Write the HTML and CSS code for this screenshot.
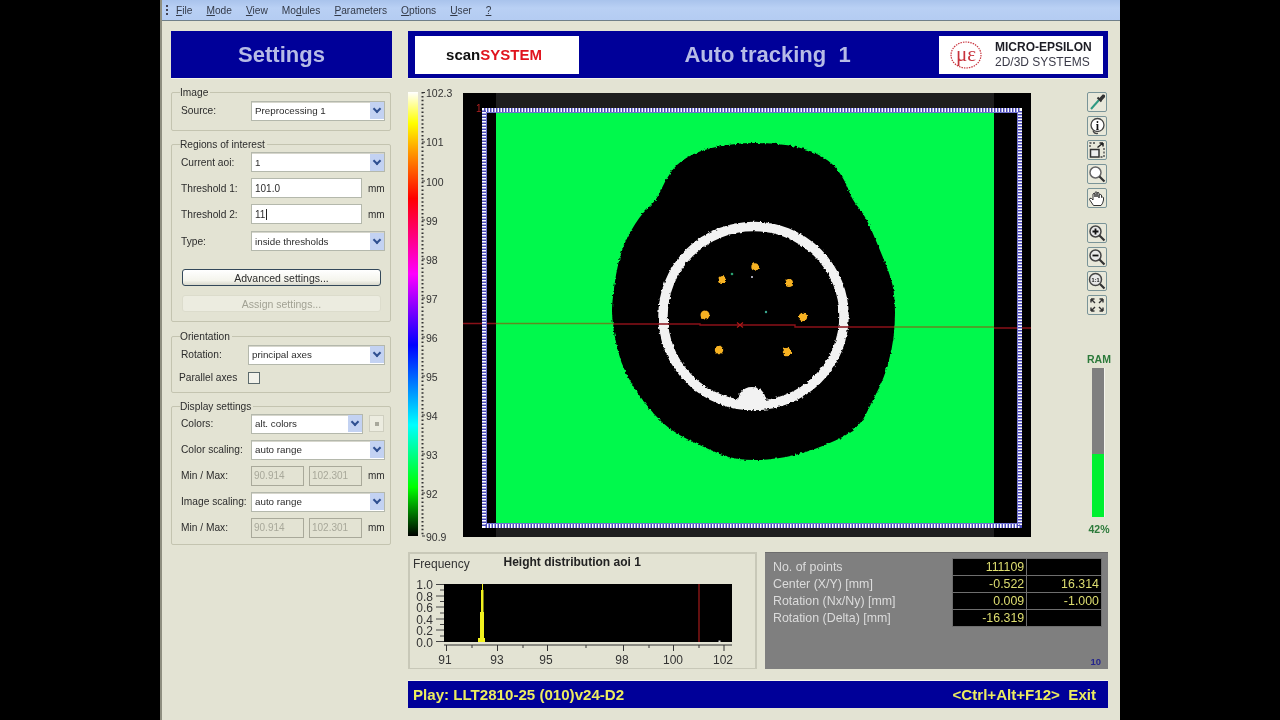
FILE: index.html
```html
<!DOCTYPE html>
<html lang="en">
<head>
  <meta charset="UTF-8" />
  <title>scanSYSTEM - Auto tracking 1</title>
  <link rel="stylesheet" href="styles.css">
</head>
<body>
<div class="app">

  <!-- menu bar -->
  <nav class="menu">
    <span class="grip"></span>
    <span><u>F</u>ile</span>
    <span><u>M</u>ode</span>
    <span><u>V</u>iew</span>
    <span>Mo<u>d</u>ules</span>
    <span><u>P</u>arameters</span>
    <span><u>O</u>ptions</span>
    <span><u>U</u>ser</span>
    <span><u>?</u></span>
  </nav>

  <div class="content">

    <!-- left settings column -->
    <aside class="sidebar">
      <h1 class="banner settings-title">Settings</h1>

      <fieldset class="group group-image">
        <legend>Image</legend>
        <div class="row">
          <label>Source:</label>
          <div class="combo"><span>Preprocessing 1</span><i class="arrow"></i></div>
        </div>
      </fieldset>

      <fieldset class="group group-roi">
        <legend>Regions of interest</legend>
        <div class="row">
          <label>Current aoi:</label>
          <div class="combo"><span>1</span><i class="arrow"></i></div>
        </div>
        <div class="row">
          <label>Threshold 1:</label>
          <div class="field"><span>101.0</span></div>
          <span class="unit">mm</span>
        </div>
        <div class="row">
          <label>Threshold 2:</label>
          <div class="field"><span class="caret">11</span></div>
          <span class="unit">mm</span>
        </div>
        <div class="row row-type">
          <label>Type:</label>
          <div class="combo"><span>inside thresholds</span><i class="arrow"></i></div>
        </div>
        <button class="btn btn-main">Advanced settings...</button>
        <button class="btn btn-off">Assign settings...</button>
      </fieldset>

      <fieldset class="group group-orient">
        <legend>Orientation</legend>
        <div class="row row-wide">
          <label>Rotation:</label>
          <div class="combo"><span>principal axes</span><i class="arrow"></i></div>
        </div>
        <div class="row row-wide row-check">
          <label>Parallel axes</label>
          <span class="check"></span>
        </div>
      </fieldset>

      <fieldset class="group group-display">
        <legend>Display settings</legend>
        <div class="row">
          <label>Colors:</label>
          <div class="combo combo-short"><span>alt. colors</span><i class="arrow"></i></div>
          <span class="mini"><b></b></span>
        </div>
        <div class="row">
          <label>Color scaling:</label>
          <div class="combo"><span>auto range</span><i class="arrow"></i></div>
        </div>
        <div class="row">
          <label>Min / Max:</label>
          <div class="field field-off"><span>90.914</span></div>
          <div class="field field-off"><span>102.301</span></div>
          <span class="unit">mm</span>
        </div>
        <div class="row">
          <label>Image scaling:</label>
          <div class="combo"><span>auto range</span><i class="arrow"></i></div>
        </div>
        <div class="row">
          <label>Min / Max:</label>
          <div class="field field-off"><span>90.914</span></div>
          <div class="field field-off"><span>102.301</span></div>
          <span class="unit">mm</span>
        </div>
      </fieldset>
    </aside>

    <main class="main">
      <header class="banner top-banner">
        <div class="logo-scan">scan<em>SYSTEM</em></div>
        <h2 class="page-title">Auto tracking&nbsp; 1</h2>
        <div class="logo-me">
          <svg class="me-mark" width="34" height="30" viewBox="0 0 34 30">
            <ellipse cx="17" cy="15" rx="15" ry="13" fill="none" stroke="#c8323c" stroke-width="1.2" stroke-dasharray="1.5 1"/>
            <text x="17" y="21" text-anchor="middle" class="me-text">&#956;&#949;</text>
          </svg>
          <div class="me-name"><b>MICRO-EPSILON</b><span>2D/3D SYSTEMS</span></div>
        </div>
      </header>

      <section class="workspace">
        <!-- colour scale -->
        <svg class="scale" width="55" height="460" viewBox="408 85 55 460">
          <defs>
            <linearGradient id="rainbow" x1="0" y1="0" x2="0" y2="1">
              <stop offset="0" stop-color="#ffffff"/>
              <stop offset="0.07" stop-color="#ffff00"/>
              <stop offset="0.135" stop-color="#ff9900"/>
              <stop offset="0.24" stop-color="#ff0000"/>
              <stop offset="0.41" stop-color="#ff00ff"/>
              <stop offset="0.57" stop-color="#0000ff"/>
              <stop offset="0.75" stop-color="#00ffff"/>
              <stop offset="0.89" stop-color="#00ff00"/>
              <stop offset="1" stop-color="#000000"/>
            </linearGradient>
          </defs>
          <rect x="408" y="92" width="10" height="444" fill="url(#rainbow)"/>
          <line x1="422.5" y1="92" x2="422.5" y2="536" stroke="#333" stroke-width="2" stroke-dasharray="1.5 2.4"/>
          <path d="M422 92.5H425M422 142H425M422 181H425M422 220H425M422 259H425M422 298H425M422 337H425M422 376H425M422 415H425M422 454H425M422 493H425M422 536H425" stroke="#333" fill="none"/>
          <g class="scale-labels">
            <text x="426" y="97">102.3</text>
            <text x="426" y="146">101</text>
            <text x="426" y="186">100</text>
            <text x="426" y="225">99</text>
            <text x="426" y="264">98</text>
            <text x="426" y="303">97</text>
            <text x="426" y="342">96</text>
            <text x="426" y="381">95</text>
            <text x="426" y="420">94</text>
            <text x="426" y="459">93</text>
            <text x="426" y="498">92</text>
            <text x="426" y="541">90.9</text>
          </g>
        </svg>

        <!-- height image -->
        <svg class="view" width="568" height="444" viewBox="463 93 568 444">
          <defs>
            <filter id="rough" filterUnits="userSpaceOnUse" x="463" y="93" width="568" height="444">
              <feTurbulence type="fractalNoise" baseFrequency="0.4" numOctaves="1" seed="3"/>
              <feDisplacementMap in="SourceGraphic" scale="3.5" xChannelSelector="R" yChannelSelector="G"/>
            </filter>
          </defs>
          <rect x="463" y="93" width="568" height="444" fill="#000"/>
          <rect x="496" y="93" width="498" height="15" fill="#1e1e1e"/>
          <rect x="496" y="528" width="498" height="9" fill="#1e1e1e"/>
          <rect x="496" y="112" width="498" height="412" fill="#00f94c"/>
          <path filter="url(#rough)" d="M731.5 144.5Q753 142 776.5 144Q800 146 815 153Q830 160 837.5 170Q845 180 848.5 190Q852 200 858.5 207.5Q865 215 872.5 232.5Q880 250 886 265Q892 280 893.5 290Q895 300 895 312.5Q895 325 893.5 337.5Q892 350 888 364Q884 378 878.5 389Q873 400 865.5 415Q858 430 836.5 440Q815 450 795 455Q775 460 755 460Q735 460 722.5 455Q710 450 689 440Q668 430 655 415Q642 400 634 387.5Q626 375 621.5 362.5Q617 350 614.5 335Q612 320 612 310Q612 300 616 275Q620 250 630 232.5Q640 215 648.5 207.5Q657 200 661 190Q665 180 672.5 170Q680 160 695 153.5Q710 147 731.5 144.5Z" fill="#000"/>
          <g filter="url(#rough)">
            <ellipse cx="753.5" cy="316" rx="90.5" ry="89.5" fill="none" stroke="#f2f2f2" stroke-width="9.5"/>
            <path d="M737 409Q737 387 752 387Q767 387 767 409Z" fill="#f2f2f2"/>
            <g fill="#f7b223">
              <circle cx="755" cy="267" r="3.7"/>
              <circle cx="722" cy="280" r="4"/>
              <circle cx="789" cy="283" r="4"/>
              <circle cx="705" cy="315" r="4.5"/>
              <circle cx="803" cy="317" r="4.2"/>
              <circle cx="719" cy="350" r="4.2"/>
              <circle cx="787" cy="352" r="4.2"/>
            </g>
          </g>
          <circle cx="732" cy="274" r="1.3" fill="#2aa070"/>
          <circle cx="752" cy="277" r="1" fill="#dde"/>
          <circle cx="766" cy="312" r="1.2" fill="#3aa890"/>
          <!-- section line -->
          <path d="M463 323.5H496" stroke="#8a1018" fill="none" stroke-width="1.4"/>
          <path d="M496 323.5H613" stroke="#5f8a20" fill="none" stroke-width="1.4"/>
          <path d="M613 324H700V325H795V327H894" stroke="#8a1018" fill="none" stroke-width="1.4"/>
          <path d="M894 327H994" stroke="#5f8a20" fill="none" stroke-width="1.4"/>
          <path d="M994 328H1031" stroke="#8a1018" fill="none" stroke-width="1.4"/>
          <path d="M737 322.5l6 5m0-5l-6 5" stroke="#b01818" fill="none" stroke-width="1.2"/>
          <!-- aoi frame -->
          <rect x="484" y="110" width="536" height="416" fill="none" stroke="#fff" stroke-width="4"/>
          <rect x="484" y="110" width="536" height="416" fill="none" stroke="#4848b8" stroke-width="4" stroke-dasharray="1.5 1.5"/>
          <rect x="486.5" y="112.5" width="531" height="411" fill="none" stroke="#7070d0" stroke-width="1"/>
          <text x="476" y="112" class="aoi-num">1</text>
        </svg>

        <!-- tool buttons and RAM gauge -->
        <div class="tools">
          <div class="tool-group">
            <button class="tool"><svg viewBox="0 0 18 18"><path d="M3 16L11 7" stroke="#2f9a82" stroke-width="2" fill="none"/><path d="M9.5 4.5L13.5 8.5M11.5 6.5L15 2.5Q16.5 2 16 3.8L12.5 7.5" stroke="#333" stroke-width="2" fill="none"/></svg></button>
            <button class="tool"><svg viewBox="0 0 18 18"><circle cx="9.5" cy="8" r="6.5" fill="#fff" stroke="#444" stroke-width="1.3"/><path d="M5 13.5Q6 17 10 16.5" fill="none" stroke="#444" stroke-width="1.2"/><text x="9.5" y="12.5" class="tool-txt" text-anchor="middle">i</text></svg></button>
            <button class="tool"><svg viewBox="0 0 18 18"><path d="M2 6V2H8" stroke="#444" stroke-width="1.3" fill="none" stroke-dasharray="2 1.5"/><path d="M16 7V16H12" stroke="#444" stroke-width="1.3" fill="none" stroke-dasharray="2 1.5"/><rect x="2.5" y="8.5" width="8.5" height="7.5" fill="#eee" stroke="#333" stroke-width="1.5"/><path d="M9.5 6.5L15 2M15 2H11.5M15 2V5.5" stroke="#222" stroke-width="1.5" fill="none"/></svg></button>
            <button class="tool"><svg viewBox="0 0 18 18"><circle cx="7.5" cy="7.5" r="5.5" fill="#fff" stroke="#666" stroke-width="1.5"/><path d="M11.5 11.5L16.5 16.5" stroke="#333" stroke-width="2.2"/></svg></button>
            <button class="tool"><svg viewBox="0 0 18 18"><path d="M5.5 16.5L1.5 10.5Q1.5 8.5 3.5 9.5L5 11V5Q6 3.5 7 5V8V3.5Q8 2 9 3.5V8V4Q10 2.8 11 4V9V6Q12 4.8 13.5 6V8.5Q14.5 7.5 15.5 8.5V11Q15 14.5 13 16.5Z" fill="#fff" stroke="#333"/></svg></button>
          </div>
          <div class="tool-group tool-group-zoom">
            <button class="tool"><svg viewBox="0 0 18 18"><circle cx="7.5" cy="7.5" r="5.5" fill="#e8e8e8" stroke="#444" stroke-width="1.5"/><path d="M11.5 11.5L16.5 16.5" stroke="#333" stroke-width="2.2"/><path d="M4.5 7.5H10.5M7.5 4.5V10.5" stroke="#111" stroke-width="1.8"/></svg></button>
            <button class="tool"><svg viewBox="0 0 18 18"><circle cx="7.5" cy="7.5" r="5.5" fill="#e8e8e8" stroke="#444" stroke-width="1.5"/><path d="M11.5 11.5L16.5 16.5" stroke="#333" stroke-width="2.2"/><path d="M4.5 7.5H10.5" stroke="#111" stroke-width="1.8"/></svg></button>
            <button class="tool"><svg viewBox="0 0 18 18"><circle cx="7.5" cy="7.5" r="6" fill="#e8e8e8" stroke="#444" stroke-width="1.5"/><path d="M12 12L16.5 16.5" stroke="#333" stroke-width="2.2"/><text x="7.5" y="9.5" class="tool-txt-small" text-anchor="middle">1:1</text></svg></button>
            <button class="tool"><svg viewBox="0 0 18 18"><path d="M3 3L7 7M3 3V6.5M3 3H6.5M15 3L11 7M15 3V6.5M15 3H11.5M3 15L7 11M3 15V11.5M3 15H6.5M15 15L11 11M15 15V11.5M15 15H11.5" stroke="#333" stroke-width="1.4" fill="none"/></svg></button>
          </div>
          <div class="ram">
            <span>RAM</span>
            <div class="ram-bar"><div class="ram-fill" style="height: 42%"></div></div>
            <span>42%</span>
          </div>
        </div>
      </section>

      <section class="bottom">
        <!-- histogram -->
        <div class="hist">
          <svg width="349" height="117" viewBox="408 552 349 117">
            <text x="413" y="568" class="hist-freq">Frequency</text>
            <text x="503.5" y="566" class="hist-title">Height distribution aoi 1</text>
            <rect x="444" y="584" width="288" height="58" fill="#000"/>
            <g class="hist-y">
              <text x="433" y="589" text-anchor="end">1.0</text>
              <text x="433" y="600.5" text-anchor="end">0.8</text>
              <text x="433" y="612" text-anchor="end">0.6</text>
              <text x="433" y="623.5" text-anchor="end">0.4</text>
              <text x="433" y="635" text-anchor="end">0.2</text>
              <text x="433" y="646.5" text-anchor="end">0.0</text>
            </g>
            <path d="M436 584.5H444M440 590H444M436 596H444M440 601.5H444M436 607H444M440 613H444M436 619H444M440 624.5H444M436 630H444M440 636H444M436 641.5H444" stroke="#444" fill="none"/>
            <path d="M444 645H732M446.5 645V651M472 645V648M497.5 645V651M523 645V648M547.5 645V651M586 645V648M623.5 645V651M649 645V648M673.5 645V651M699 645V648M724 645V651" stroke="#333" fill="none"/>
            <path d="M478 642V638H480V612H481V590H482V584H483V590H483.5V612H484V638H485V642Z" fill="#f2f21e"/>
            <line x1="699" y1="584" x2="699" y2="642" stroke="#7c1414" stroke-width="1.6"/>
            <rect x="718.5" y="640.5" width="2" height="1.5" fill="#ddd"/>
            <g class="hist-x">
              <text x="445" y="664" text-anchor="middle">91</text>
              <text x="497" y="664" text-anchor="middle">93</text>
              <text x="546" y="664" text-anchor="middle">95</text>
              <text x="622" y="664" text-anchor="middle">98</text>
              <text x="673" y="664" text-anchor="middle">100</text>
              <text x="723" y="664" text-anchor="middle">102</text>
            </g>
          </svg>
        </div>

        <!-- results -->
        <div class="stats">
          <table class="stats-table">
            <tr><th>No. of points</th><td>111109</td><td></td></tr>
            <tr><th>Center (X/Y) [mm]</th><td>-0.522</td><td>16.314</td></tr>
            <tr><th>Rotation (Nx/Ny) [mm]</th><td>0.009</td><td>-1.000</td></tr>
            <tr><th>Rotation (Delta) [mm]</th><td>-16.319</td><td></td></tr>
          </table>
          <span class="fps">10</span>
        </div>
      </section>

      <footer class="status">
        <span>Play: LLT2810-25 (010)v24-D2</span>
        <span>&lt;Ctrl+Alt+F12&gt;&nbsp; Exit</span>
      </footer>
    </main>
  </div>
</div>
</body>
</html>
```

FILE: styles.css
```css
/* video capture of the desktop app: black side bars, app in the middle */
html, body {
  margin: 0;
  padding: 0;
  height: 100%;
  background: #000;
  overflow: hidden;
}

.app {
  width: 960px;
  height: 720px;
  margin: 0 auto;
  box-sizing: border-box;
  border-left: 2px solid #8f8f80;
  background: #e3e3d3;
  color: #2c2c2c;
  font-family: "Liberation Sans", Arial, sans-serif;
  font-size: 10.2px;
  filter: blur(0.4px);
}

/* ---- menu ---- */
.menu {
  display: flex;
  align-items: center;
  gap: 14px;
  height: 20px;
  padding-left: 12px;
  background: linear-gradient(#a9c3ec, #b9d0f4 40%, #b4ccf2);
  border-bottom: 1px solid #6f7f88;
  color: #333a48;
  font-size: 10.2px;
}

.grip {
  width: 2px;
  height: 11px;
  margin-left: -8px;
  margin-right: -6px;
  background: repeating-linear-gradient(#445 0 2px, transparent 2px 4px);
}

/* ---- columns ---- */
.content {
  display: flex;
  gap: 16px;
  padding: 10px 0 0 9px;
}

.banner {
  height: 48px;
  margin: 0;
  box-sizing: border-box;
  background: #000099;
  border-bottom: 1px solid #f4f4ea;
}

.sidebar {
  flex: none;
  width: 221px;
}

.settings-title {
  line-height: 47px;
  text-align: center;
  color: #b6bbe6;
  font-size: 22px;
  font-weight: bold;
}

/* ---- settings groups ---- */
.group {
  width: 220px;
  min-width: 0;
  margin: 7.5px 0 0;
  padding: 3px 5px 8px 9px;
  box-sizing: border-box;
  border: 1px solid #c4c4b0;
  border-radius: 2px;
}

.group legend {
  padding: 0 2px 0 0;
  margin-left: -1px;
  line-height: 13px;
}

.group-image {
  margin-top: 6.5px;
  padding-top: 2px;
  padding-bottom: 9px;
}

.group-roi {
  padding-top: 1px;
  padding-bottom: 9px;
}

.group-orient {
  padding-top: 2px;
  padding-bottom: 4px;
}

.group-display {
  padding-top: 0.5px;
  padding-bottom: 6.5px;
}

.row {
  display: flex;
  align-items: center;
  height: 20px;
  margin-bottom: 6px;
}

.row:last-child {
  margin-bottom: 0;
}

.row label {
  flex: none;
  width: 70px;
}

.combo {
  display: flex;
  align-items: center;
  flex: 1;
  height: 20px;
  box-sizing: border-box;
  padding-left: 3px;
  background: #fff;
  border: 1px solid #b4b8ac;
  box-shadow: inset 0 1px 0 #d6d6cc;
  font-size: 9.8px;
}

.combo span {
  flex: 1;
}

.combo-short {
  flex: none;
  width: 112px;
}

.arrow {
  position: relative;
  width: 14px;
  height: 17px;
  background: #c3d2f2;
}

.arrow::after {
  content: "";
  position: absolute;
  left: 4px;
  top: 4px;
  width: 4px;
  height: 4px;
  border-right: 2px solid #2f4f90;
  border-bottom: 2px solid #2f4f90;
  transform: rotate(45deg);
}

.field {
  display: flex;
  align-items: center;
  width: 111px;
  height: 20px;
  box-sizing: border-box;
  padding-left: 3px;
  background: #fff;
  border: 1px solid #b4b8ac;
  font-size: 10px;
}

.caret {
  padding-right: 1px;
  border-right: 1px solid #222;
}

.field-off {
  width: 53px;
  margin-right: 5px;
  padding-left: 2px;
  background: transparent;
  border-color: #a9a99a;
  color: #a8a89a;
}

.field-off + .unit {
  margin-left: 1px;
}

.unit {
  margin-left: 6px;
  font-size: 10px;
}

.row-type {
  margin-top: 7px;
  margin-bottom: 18px;
}

.btn {
  display: block;
  height: 17px;
  padding: 0;
  font-family: inherit;
  font-size: 10.5px;
  border-radius: 3px;
}

.btn-main {
  width: 199px;
  margin: 0 0 9px 1px;
  background: linear-gradient(#fff, #f4f4ec 70%, #d8d8cc);
  border: 1px solid #33485a;
  color: #2c2c2c;
}

.btn-off {
  width: 199px;
  margin-left: 1px;
  background: #ecece0;
  border: 1px solid #dcdccc;
  color: #a2a294;
}

.row-wide label {
  width: 67px;
}

.row-check {
  margin-top: -3px;
}

.row-check label {
  margin-left: -2px;
  width: 69px;
}

.check {
  width: 10px;
  height: 10px;
  background: #f2f2ea;
  border: 1px solid #5c6a6c;
}

.mini {
  display: flex;
  align-items: center;
  justify-content: center;
  width: 13px;
  height: 15px;
  margin-left: 6px;
  border: 1px solid #cfcfc0;
  background: #ecece0;
}

.mini b {
  width: 4px;
  height: 4px;
  background: #a8a89c;
}

/* ---- main column ---- */
.main {
  flex: none;
  width: 700px;
}

.top-banner {
  display: flex;
  align-items: center;
  padding: 0 5px 0 7px;
}

.logo-scan {
  flex: none;
  width: 164px;
  height: 38px;
  padding-right: 6px;
  box-sizing: border-box;
  line-height: 38px;
  text-align: center;
  background: #fff;
  color: #111;
  font-size: 15px;
  font-weight: bold;
}

.logo-scan em {
  font-style: normal;
  color: #e0141e;
}

.page-title {
  flex: 1;
  margin: 0;
  padding-left: 17px;
  text-align: center;
  color: #b6bbe6;
  font-size: 22px;
  font-weight: bold;
}

.logo-me {
  display: flex;
  align-items: center;
  flex: none;
  width: 164px;
  height: 38px;
  box-sizing: border-box;
  padding-left: 10px;
  gap: 12px;
  background: #fff;
}

.me-text {
  fill: #c8323c;
  font-family: "Liberation Serif", serif;
  font-size: 21px;
}

.me-name {
  display: flex;
  flex-direction: column;
  color: #1c1c24;
  font-size: 12px;
  line-height: 14.5px;
}

.me-name span {
  color: #3a3a48;
}

.workspace {
  display: flex;
  height: 467px;
  margin-top: 6px;
  padding-top: 7px;
  box-sizing: border-box;
}

.scale {
  flex: none;
  margin-top: -7px;
}

.scale-labels text {
  fill: #333;
  font-size: 10.5px;
}

.view {
  flex: none;
  margin-top: 1px;
}

.aoi-num {
  fill: #b02020;
  font-size: 10px;
}

.tools {
  flex: none;
  width: 24px;
  margin-left: 56px;
}

.tool-group {
  display: flex;
  flex-direction: column;
  gap: 4px;
}

.tool-group-zoom {
  margin-top: 15px;
}

.tool {
  display: block;
  width: 20px;
  height: 20px;
  padding: 0;
  box-sizing: border-box;
  background: #e8e8da;
  border: 1px solid #7a9498;
  border-radius: 2px;
}

.tool svg {
  display: block;
  width: 18px;
  height: 18px;
}

.tool-txt {
  font-family: "Liberation Serif", serif;
  font-size: 12px;
  font-weight: bold;
  fill: #111;
}

.tool-txt-small {
  font-size: 5.5px;
  font-weight: bold;
  fill: #111;
}

.ram {
  display: flex;
  flex-direction: column;
  align-items: center;
  margin-top: 38px;
  color: #2c7a3a;
  font-size: 10.5px;
  font-weight: bold;
  line-height: 12px;
}

.ram-bar {
  display: flex;
  align-items: flex-end;
  width: 12px;
  height: 149px;
  margin: 3px 2px 6px 0;
  background: #7f7f7f;
  border-right: 1px solid #f4f4ec;
}

.ram-fill {
  flex: 1;
  background: #00f030;
}

/* ---- bottom panels ---- */
.bottom {
  display: flex;
  gap: 8px;
  height: 117px;
}

.hist {
  flex: none;
  width: 349px;
  height: 117px;
  box-sizing: border-box;
  border: 2px solid #c8c8b8;
  border-bottom-width: 1px;
}

.hist svg {
  display: block;
  margin: -2px 0 0 -2px;
}

.hist-freq {
  font-size: 12px;
  fill: #333;
}

.hist-title {
  font-size: 12px;
  font-weight: bold;
  fill: #222;
}

.hist-y text,
.hist-x text {
  font-size: 12px;
  fill: #333;
}

.stats {
  display: flex;
  flex-direction: column;
  flex: none;
  width: 343px;
  box-sizing: border-box;
  padding: 5px 6px 2px 8px;
  background: #7f7f7f;
  border-top: 1px solid #6c6c6c;
}

.stats-table {
  width: 329px;
  border-collapse: collapse;
  table-layout: fixed;
  font-size: 12.4px;
}

.stats-table th {
  width: 179px;
  height: 17px;
  padding: 0;
  box-sizing: border-box;
  text-align: left;
  font-weight: normal;
  color: #dcdcdc;
}

.stats-table td {
  padding: 0 2px 0 0;
  box-sizing: border-box;
  text-align: right;
  background: #000;
  color: #dede70;
  border: 1px solid #6e6e6e;
}

.fps {
  margin-top: auto;
  text-align: right;
  padding-right: 1px;
  color: #26268c;
  font-size: 9.5px;
  font-weight: bold;
}

.status {
  display: flex;
  justify-content: space-between;
  align-items: center;
  height: 28px;
  margin-top: 11px;
  padding: 0 12px 0 5px;
  background: #000099;
  border-top: 1px solid #f4f4ea;
  box-sizing: border-box;
  color: #ecec60;
  font-size: 15.1px;
  font-weight: bold;
}
```
